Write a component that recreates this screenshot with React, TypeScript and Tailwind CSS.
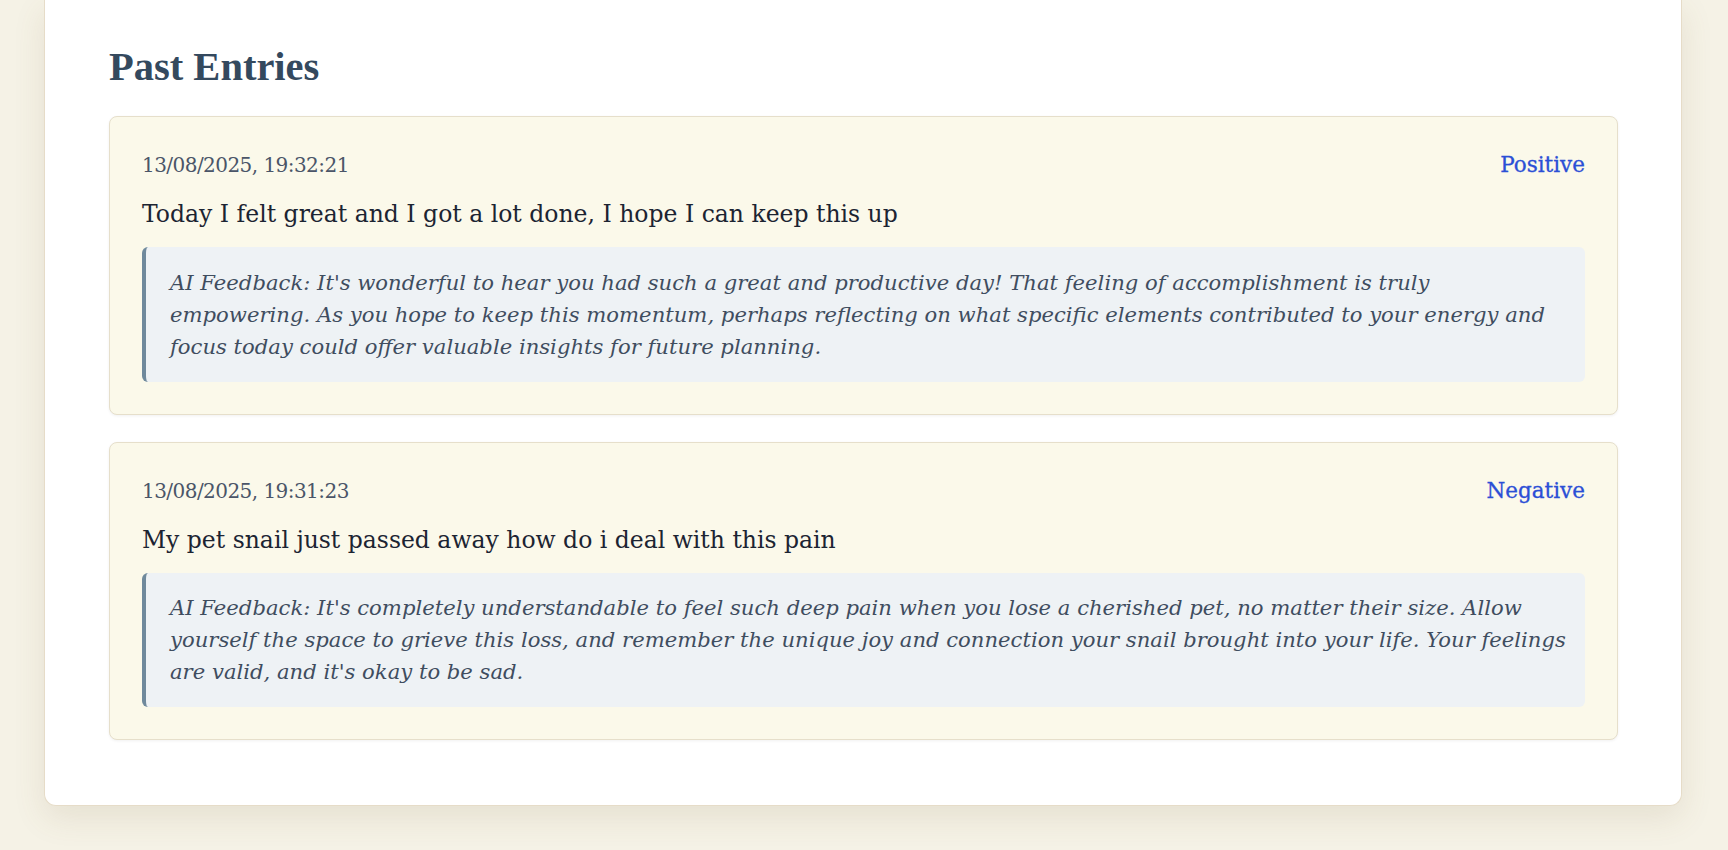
const entries = [
  {
    date: "13/08/2025, 19:32:21",
    sentiment: "Positive",
    text: "Today I felt great and I got a lot done, I hope I can keep this up",
    feedback: [
      "AI Feedback: It's wonderful to hear you had such a great and productive day! That feeling of accomplishment is truly",
      "empowering. As you hope to keep this momentum, perhaps reflecting on what specific elements contributed to your energy and",
      "focus today could offer valuable insights for future planning.",
    ],
  },
  {
    date: "13/08/2025, 19:31:23",
    sentiment: "Negative",
    text: "My pet snail just passed away how do i deal with this pain",
    feedback: [
      "AI Feedback: It's completely understandable to feel such deep pain when you lose a cherished pet, no matter their size. Allow",
      "yourself the space to grieve this loss, and remember the unique joy and connection your snail brought into your life. Your feelings",
      "are valid, and it's okay to be sad.",
    ],
  },
];

function EntryCard({ entry }: { entry: (typeof entries)[number] }) {
  return (
    <div className="bg-[#fbf9ea] border border-[#e6dfcb] rounded-lg shadow-[0_1px_3px_rgba(0,0,0,0.06)] p-8">
      {/* Date + sentiment */}
      <div className="flex justify-between items-baseline leading-[32px] mb-[17px]">
        <span className="text-[20px] tracking-[-0.55px] text-[#4a5568]">{entry.date}</span>
        <span className="text-[21.5px] text-[#2b4fd6] [-webkit-text-stroke:0.3px_#2b4fd6]">
          {entry.sentiment}
        </span>
      </div>

      <p className="text-[23.5px] leading-[32px] text-[#1c2432] mb-[17px]">
        {entry.text}
      </p>

      {/* AI feedback */}
      <blockquote className="bg-[#eef2f5] border-l-4 border-[#6f899c] rounded-md px-6 pt-[19.5px] pb-[19px] italic text-[21.15px] leading-[32px] text-[#3f4d5f]">
        {entry.feedback.map((line, i) => (
          <span key={i} className="block whitespace-nowrap">
            {line}
          </span>
        ))}
      </blockquote>
    </div>
  );
}

export default function App() {
  return (
    <div className="min-h-screen bg-[#f5f2e6] font-['DejaVu_Serif',serif]">
      <div className="ml-[44px] w-[1638px] bg-white border border-t-0 border-[#e6dcc8] rounded-b-xl shadow-[0_12px_32px_rgba(120,100,60,0.12)] pl-[64px] pr-[63px] pt-[45px] pb-[64.5px]">
        <h2 className="font-['Liberation_Serif',serif] font-bold text-[40.5px] leading-[44px] text-[#34495e] mb-[27px]">
          Past Entries
        </h2>
        <div className="flex flex-col gap-[27px]">
          {entries.map((entry, i) => (
            <EntryCard key={i} entry={entry} />
          ))}
        </div>
      </div>
    </div>
  );
}
